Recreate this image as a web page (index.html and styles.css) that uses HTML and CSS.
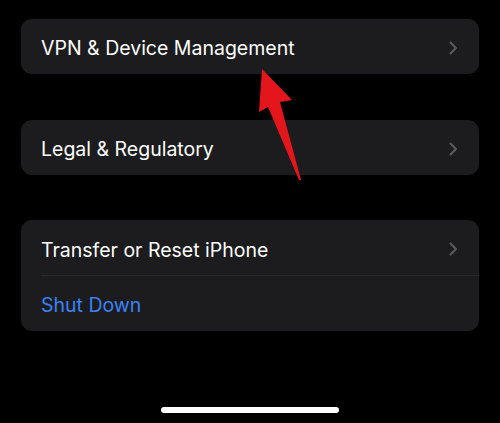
FILE: index.html
```html
<!DOCTYPE html>
<html>
<head>
<meta charset="utf-8">
<link rel="stylesheet" href="styles.css">
</head>
<body>
<div class="screen">
  <div class="group">
    <div class="row"><span class="label">VPN &amp; Device Management</span><span class="chev"><svg width="9" height="14" viewBox="0 0 9 14"><path d="M1.5 1.5 L7 7 L1.5 12.5" fill="none" stroke="#5b5b5f" stroke-width="2" stroke-linecap="round" stroke-linejoin="round"/></svg></span></div>
  </div>
  <div class="group">
    <div class="row"><span class="label">Legal &amp; Regulatory</span><span class="chev"><svg width="9" height="14" viewBox="0 0 9 14"><path d="M1.5 1.5 L7 7 L1.5 12.5" fill="none" stroke="#5b5b5f" stroke-width="2" stroke-linecap="round" stroke-linejoin="round"/></svg></span></div>
  </div>
  <div class="group">
    <div class="row sep"><span class="label">Transfer or Reset iPhone</span><span class="chev"><svg width="9" height="14" viewBox="0 0 9 14"><path d="M1.5 1.5 L7 7 L1.5 12.5" fill="none" stroke="#5b5b5f" stroke-width="2" stroke-linecap="round" stroke-linejoin="round"/></svg></span></div>
    <div class="row"><span class="label blue">Shut Down</span></div>
  </div>
  <div class="home"></div>
  <svg class="arrow" width="500" height="423" viewBox="0 0 500 423">
    <polygon points="262,69 292,100 280,102 301,180 299,180 268,107 259,112" fill="#e4151b"/>
  </svg>
</div>
</body>
</html>
```

FILE: styles.css
```css
html, body {
  margin: 0;
  padding: 0;
  background: #000;
}
.screen {
  position: relative;
  width: 500px;
  height: 423px;
  padding: 19px 21px 0;
  box-sizing: border-box;
  display: flex;
  flex-direction: column;
  font-family: Inter, "Noto Sans", sans-serif;
}
.group {
  background: #1c1c1e;
  border-radius: 11px;
  margin-bottom: 46px;
  overflow: hidden;
}
.group:nth-child(2) { margin-bottom: 45px; }
.row {
  height: 55px;
  display: flex;
  align-items: center;
  justify-content: space-between;
  padding: 0 21px 0 20px;
  position: relative;
}
.row.sep {
  height: 56px;
}
.row.sep::after {
  content: "";
  position: absolute;
  left: 20px;
  right: 0;
  bottom: 0;
  height: 1px;
  background: #2a2a2c;
}
.label {
  color: #fff;
  font-size: 19.5px;
  padding-top: 3px;
}
.label.blue {
  color: #3b82f6;
}
.chev {
  display: flex;
  align-items: center;
  padding-top: 2px;
}
.home {
  position: absolute;
  left: 161px;
  top: 407px;
  width: 178px;
  height: 6px;
  border-radius: 3px;
  background: #fff;
}
.arrow {
  position: absolute;
  left: 0;
  top: 0;
}
```
